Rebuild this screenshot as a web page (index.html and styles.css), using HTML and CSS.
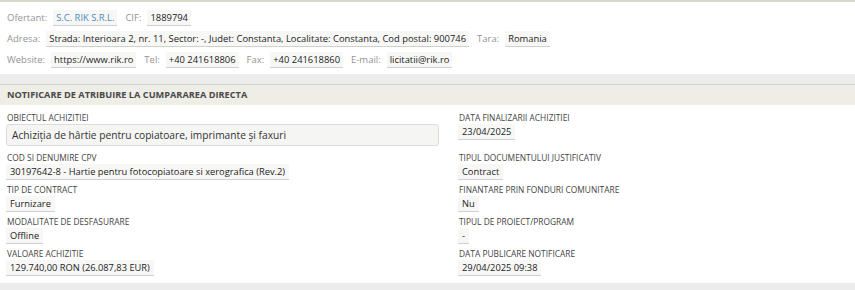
FILE: index.html
```html
<!DOCTYPE html>
<html lang="ro">
<head>
    <meta charset="UTF-8">
    <title>Notificare de atribuire</title>
    <link rel="stylesheet" href="styles.css">
</head>
<body>
    <div class="topbar"></div>
    <div class="panel supplier">
        <div class="line">
            <span class="lbl">Ofertant:</span><span class="val link">S.C. RIK S.R.L.</span>
            <span class="lbl">CIF:</span><span class="val">1889794</span>
        </div>
        <div class="line">
            <span class="lbl">Adresa:</span><span class="val">Strada: Interioara 2, nr. 11, Sector: -, Judet: Constanta, Localitate: Constanta, Cod postal: 900746</span>
            <span class="lbl">Tara:</span><span class="val">Romania</span>
        </div>
        <div class="line">
            <span class="lbl">Website:</span><span class="val">https://www.rik.ro</span>
            <span class="lbl">Tel:</span><span class="val">+40 241618806</span>
            <span class="lbl">Fax:</span><span class="val">+40 241618860</span>
            <span class="lbl">E-mail:</span><span class="val">licitatii@rik.ro</span>
        </div>
    </div>

    <div class="panel notice">
        <div class="panel-head">NOTIFICARE DE ATRIBUIRE LA CUMPARAREA DIRECTA</div>
        <div class="fields">
            <div class="field first">
                <div class="caption">OBIECTUL ACHIZITIEI</div>
                <div class="box">Achiziția de hârtie pentru copiatoare, imprimante și faxuri</div>
            </div>
            <div class="field first">
                <div class="caption">DATA FINALIZARII ACHIZITIEI</div>
                <div class="val">23/04/2025</div>
            </div>
            <div class="field">
                <div class="caption">COD SI DENUMIRE CPV</div>
                <div class="val">30197642-8 - Hartie pentru fotocopiatoare si xerografica (Rev.2)</div>
            </div>
            <div class="field">
                <div class="caption">TIPUL DOCUMENTULUI JUSTIFICATIV</div>
                <div class="val">Contract</div>
            </div>
            <div class="field">
                <div class="caption">TIP DE CONTRACT</div>
                <div class="val">Furnizare</div>
            </div>
            <div class="field">
                <div class="caption">FINANTARE PRIN FONDURI COMUNITARE</div>
                <div class="val">Nu</div>
            </div>
            <div class="field">
                <div class="caption">MODALITATE DE DESFASURARE</div>
                <div class="val">Offline</div>
            </div>
            <div class="field">
                <div class="caption">TIPUL DE PROIECT/PROGRAM</div>
                <div class="val">-</div>
            </div>
            <div class="field">
                <div class="caption">VALOARE ACHIZITIE</div>
                <div class="val">129.740,00 RON (26.087,83 EUR)</div>
            </div>
            <div class="field">
                <div class="caption">DATA PUBLICARE NOTIFICARE</div>
                <div class="val">29/04/2025 09:38</div>
            </div>
        </div>
    </div>
</body>
</html>
```

FILE: styles.css
```css
body {
    margin: 0;
    background: #ececec;
    font-family: "Open Sans", Arial, sans-serif;
    color: #333;
}
.topbar {
    height: 2px;
    background: #d7dac8;
}
.panel {
    background: #fff;
}
.supplier {
    padding: 5px 0 4px 7px;
    margin-bottom: 10px;
}
.line {
    display: flex;
    align-items: center;
    height: 21px;
    font-size: 9.5px;
}
.lbl {
    color: #949494;
    margin-right: 6px;
}
.val {
    background: #f7f7f6;
    border-bottom: 1px solid #d0d0d0;
    padding: 0 3px;
    line-height: 15px;
    font-size: 9.4px;
    color: #222;
    margin-right: 8px;
}
.link {
    color: #4d8bbd;
}
.notice {
    border-top: 1px solid #d2d2d2;
    padding-bottom: 3px;
}
.panel-head {
    background: #eeede6;
    height: 20px;
    line-height: 20px;
    padding-left: 7px;
    font-size: 9.2px;
    font-weight: bold;
    color: #4a4a4a;
}
.fields {
    display: grid;
    grid-template-columns: 452px 1fr;
    padding: 7px 0 0 6px;
}
.field {
    height: 32px;
}
.field.first {
    height: 40px;
}
.caption {
    font-size: 8.4px;
    color: #444;
    height: 11px;
    line-height: 11px;
    padding-left: 1px;
    margin-bottom: 1px;
}
.field .val {
    width: fit-content;
    margin-right: 0;
    font-size: 9.3px;
    padding: 0 4px;
}
.box {
    width: 426px;
    height: 20px;
    line-height: 20px;
    padding-left: 5px;
    background: #f5f5f3;
    border: 1px solid #dcdcdc;
    border-radius: 3px;
    font-size: 10.2px;
    color: #333;
}
```
